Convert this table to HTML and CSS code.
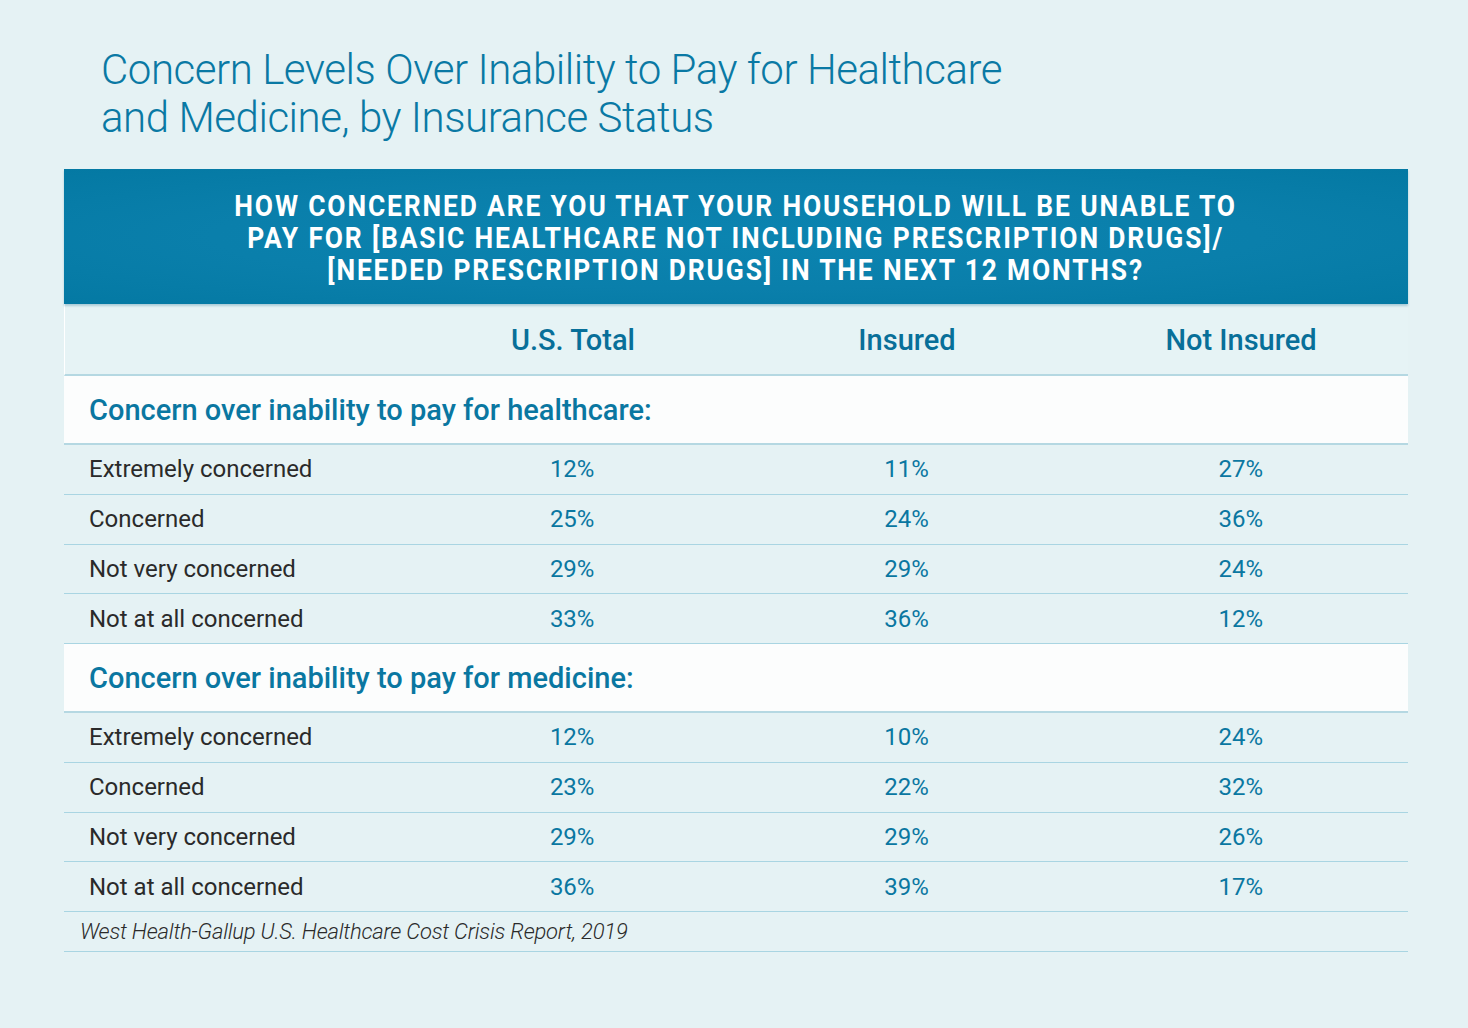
FILE: index.html
```html
<!DOCTYPE html>
<html lang="en">
<head>
<meta charset="utf-8">
<title>Concern Levels Over Inability to Pay</title>
<link rel="stylesheet" href="styles.css">
</head>
<body>
<div class="page">
  <h1 class="title">Concern Levels Over Inability to Pay for Healthcare<br>and Medicine, by Insurance Status</h1>
  <div class="table">
    <div class="banner">
      <p>HOW CONCERNED ARE YOU THAT YOUR HOUSEHOLD WILL BE UNABLE TO<br>PAY FOR [BASIC HEALTHCARE NOT INCLUDING PRESCRIPTION DRUGS]/<br>[NEEDED PRESCRIPTION DRUGS] IN THE NEXT 12 MONTHS?</p>
    </div>
    <div class="row head">
      <div></div><div class="col">U.S. Total</div><div class="col">Insured</div><div class="col">Not Insured</div>
    </div>
    <div class="section">Concern over inability to pay for healthcare:</div>
    <div class="row data"><div class="label">Extremely concerned</div><div class="num">12%</div><div class="num">11%</div><div class="num">27%</div></div>
    <div class="row data"><div class="label">Concerned</div><div class="num">25%</div><div class="num">24%</div><div class="num">36%</div></div>
    <div class="row data"><div class="label">Not very concerned</div><div class="num">29%</div><div class="num">29%</div><div class="num">24%</div></div>
    <div class="row data"><div class="label">Not at all concerned</div><div class="num">33%</div><div class="num">36%</div><div class="num">12%</div></div>
    <div class="section">Concern over inability to pay for medicine:</div>
    <div class="row data"><div class="label">Extremely concerned</div><div class="num">12%</div><div class="num">10%</div><div class="num">24%</div></div>
    <div class="row data"><div class="label">Concerned</div><div class="num">23%</div><div class="num">22%</div><div class="num">32%</div></div>
    <div class="row data"><div class="label">Not very concerned</div><div class="num">29%</div><div class="num">29%</div><div class="num">26%</div></div>
    <div class="row data"><div class="label">Not at all concerned</div><div class="num">36%</div><div class="num">39%</div><div class="num">17%</div></div>
    <div class="source">West Health-Gallup U.S. Healthcare Cost Crisis Report, 2019</div>
  </div>
</div>
</body>
</html>
```
FILE: styles.css
```css
* { box-sizing: border-box; }
html, body { margin: 0; padding: 0; }
body {
  background: #e5f2f4;
  font-family: Roboto, "Liberation Sans", sans-serif;
  width: 1468px;
  height: 1028px;
  overflow: hidden;
}
.page {
  padding: 46px 60px 0 64px;
}
.title {
  margin: 0 0 27px 37px;
  font-weight: 300;
  font-size: 42px;
  line-height: 48px;
  color: #0a79a4;
  letter-spacing: -0.45px;
}
.table {
  width: 1344px;
}
.banner {
  height: 135px;
  background: radial-gradient(ellipse at center, #0b84b0 0%, #0a7fab 55%, #0479a3 100%);
  box-shadow: 0 2px 2px rgba(0, 90, 130, 0.25);
  display: flex;
  align-items: center;
  justify-content: center;
  position: relative;
  z-index: 1;
}
.banner p {
  margin: 0;
  color: #ffffff;
  font-weight: 700;
  font-size: 30px;
  line-height: 32px;
  text-align: center;
  letter-spacing: 2.1px;
  transform: scaleX(0.88);
  padding-top: 2px;
  white-space: nowrap;
}
.row {
  display: grid;
  grid-template-columns: 341px 1fr 1fr 1fr;
  align-items: center;
}
.head {
  height: 72px;
  background: #e6f3f5;
  border-bottom: 2px solid #b5d8e2;
  border-left: 1px solid #ffffff;
}
.col {
  text-align: center;
  color: #086f99;
  font-weight: 500;
  font-size: 29px;
  padding-top: 2px;
}
.section {
  height: 69px;
  background: #fcfdfd;
  border-bottom: 2px solid #b5d8e2;
  padding: 0 0 0 25px;
  display: flex;
  align-items: center;
  color: #0a77a1;
  font-weight: 500;
  font-size: 29px;
}
.data {
  height: 49.75px;
  border-bottom: 1px solid #a9d5e2;
}
.label {
  padding-left: 25px;
  color: #2a2a2a;
  font-size: 24px;
}
.num {
  text-align: center;
  color: #0a77a1;
  font-size: 24px;
}
.source {
  height: 40px;
  border-bottom: 1px solid #a9d5e2;
  padding-left: 16px;
  display: flex;
  align-items: center;
  font-style: italic;
  font-weight: 300;
  font-size: 22px;
  color: #2a2a2a;
  letter-spacing: -0.2px;
}
```
